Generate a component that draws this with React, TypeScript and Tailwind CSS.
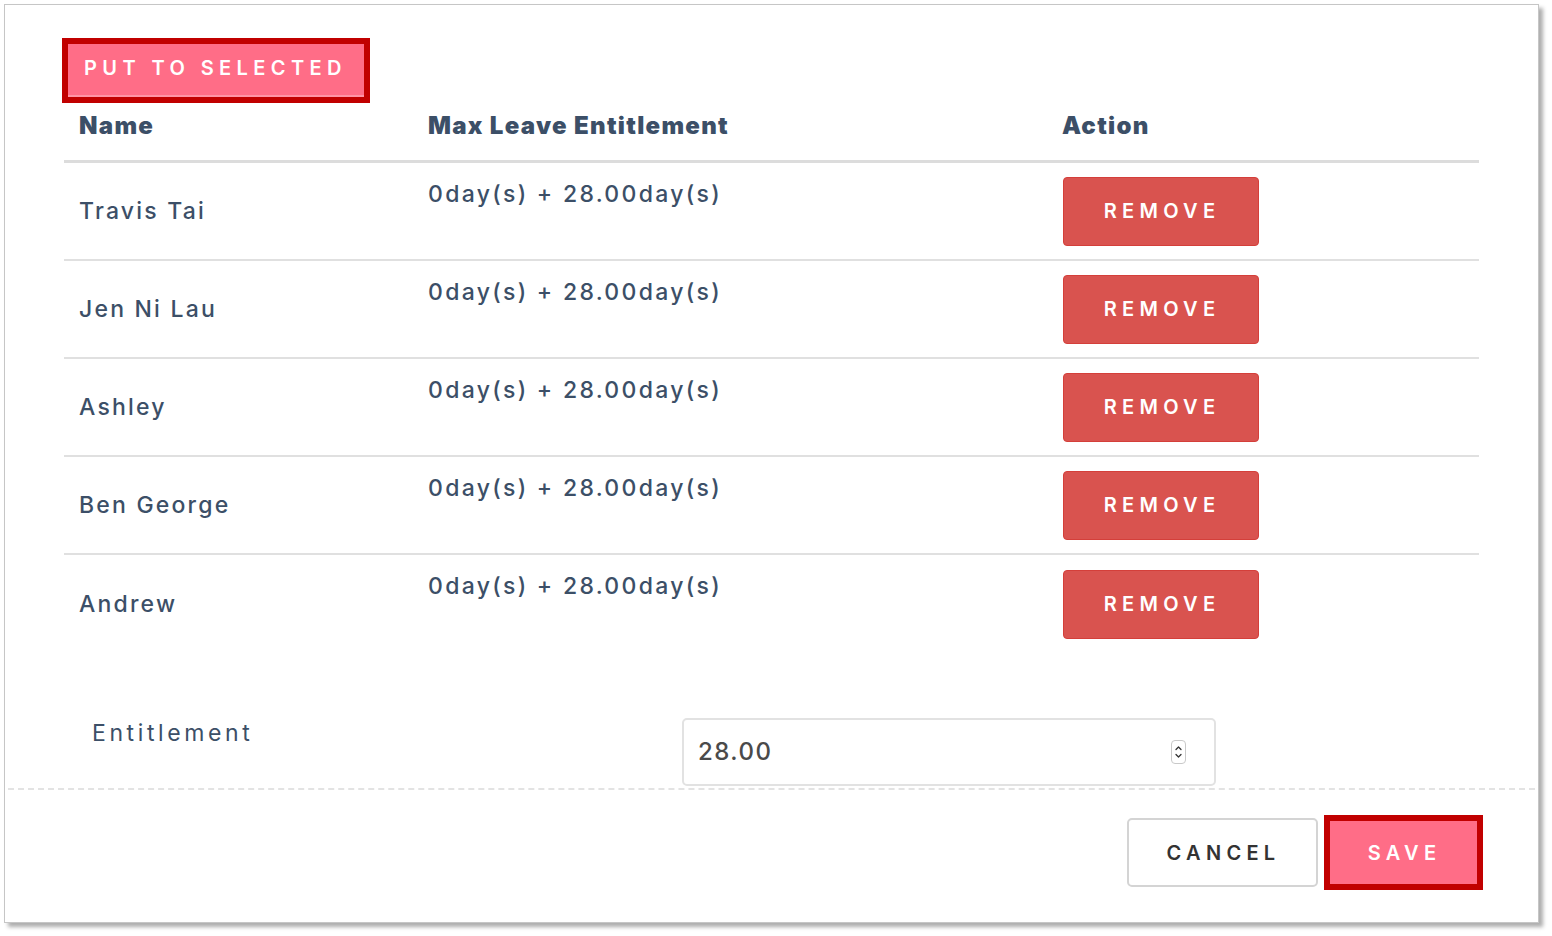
import React from 'react';

const people = ['Travis Tai', 'Jen Ni Lau', 'Ashley', 'Ben George', 'Andrew'];

function Spinner() {
  return (
    <div className="w-[15px] h-[24px] rounded-[4px] border border-[#c9c9c9] flex flex-col items-center justify-center bg-white">
      <svg width="9" height="18" viewBox="0 0 9 18" fill="none" stroke="#333" strokeWidth="1.3" strokeLinecap="round" strokeLinejoin="round">
        <path d="M2 6.5 L4.5 4 L7 6.5" />
        <path d="M2 11.5 L4.5 14 L7 11.5" />
      </svg>
    </div>
  );
}

export default function App() {
  return (
    <div className="w-full h-[936px] bg-white pt-[4px] pl-[4px] font-['Inter','Liberation_Sans',sans-serif]">
      <div className="w-[1535px] h-[919px] border border-[#c6c6c6] bg-white shadow-[4px_4px_4px_rgba(0,0,0,0.32)] flex flex-col">
        <div className="px-[59px] pt-[33px]">
          <button
            type="button"
            className="ml-[-2px] h-[65px] w-[308px] border-[6px] border-[#c10000] bg-[#ff6d87] flex items-center"
          >
            <span className="h-full w-full border-b-2 border-[#ff94a6] flex items-center pl-[16px] pb-[3px] text-white text-[20px] font-semibold tracking-[5.4px] uppercase">
              Put to selected
            </span>
          </button>

          <div className="grid grid-cols-[349px_634px_1fr] h-[60px] items-center pb-[11px] border-b-[3px] border-[#dcdcdc] text-[#3c4f67] text-[24px] font-black tracking-[1.3px]">
            <div className="pl-[15px]">Name</div>
            <div className="pl-[15px]">Max Leave Entitlement</div>
            <div className="pl-[15px]">Action</div>
          </div>

          {people.map((name, i) => (
            <div
              key={name}
              className={`grid grid-cols-[349px_634px_1fr] h-[98px] items-center text-[#3c4f67] text-[23px] ${
                i < people.length - 1 ? 'border-b-2 border-[#e0e0e0]' : ''
              }`}
            >
              <div className="pl-[15px] tracking-[2.2px] font-medium">{name}</div>
              <div className="pl-[15px] self-start pt-[16px] leading-[30px] tracking-[2.3px] font-medium">
                0day(s) + 28.00day(s)
              </div>
              <div className="pl-[16px]">
                <button
                  type="button"
                  className="w-[196px] h-[69px] rounded-[4px] bg-[#d9534f] border border-[#d43f3a] text-white text-[20px] font-semibold tracking-[5.3px] pl-[2px] uppercase"
                >
                  Remove
                </button>
              </div>
            </div>
          ))}

          <div className="flex items-start mt-[65px] pb-[2px]">
            <div className="w-[618px] pl-[28px] leading-[30px] text-[23px] text-[#3c4f67] tracking-[3.6px]">
              Entitlement
            </div>
            <div className="w-[534px] h-[68px] rounded-[5px] border-2 border-[#e2e2e2] flex items-center justify-between pl-[14px] pr-[28px]">
              <span className="text-[24px] text-[#4a4a4a] font-medium tracking-[1.5px]">28.00</span>
              <Spinner />
            </div>
          </div>
        </div>

        <div className="mx-[3px] border-t-2 border-dashed border-[#e3e3e3]" />

        <div className="flex justify-end items-center pr-[55px] pt-[25px] gap-[6px]">
          <button
            type="button"
            className="w-[191px] h-[69px] rounded-[5px] border-2 border-[#d4d4d4] bg-white text-[#333] text-[20px] font-semibold tracking-[5.3px] pl-[2px] uppercase"
          >
            Cancel
          </button>
          <button
            type="button"
            className="w-[159px] h-[75px] border-[6px] border-[#c10000] bg-[#ff6d87] text-white text-[20px] font-semibold tracking-[5.3px] pl-[2px] uppercase"
          >
            Save
          </button>
        </div>
      </div>
    </div>
  );
}
